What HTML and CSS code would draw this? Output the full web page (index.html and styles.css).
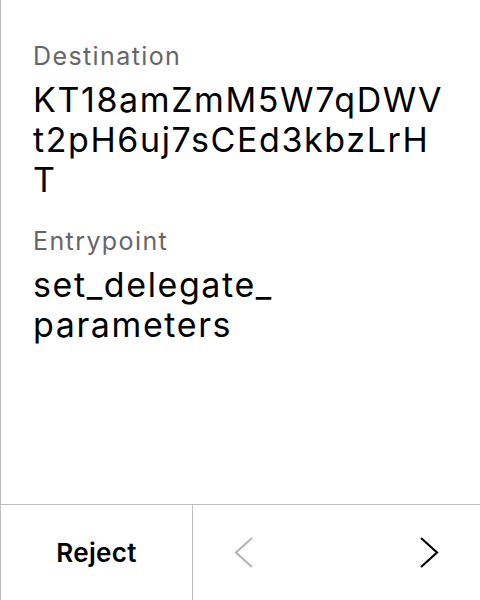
FILE: index.html
```html
<!DOCTYPE html>
<html>
<head>
<meta charset="utf-8">
<link rel="stylesheet" href="styles.css">
</head>
<body>
<div class="screen">
  <main class="content">
    <div class="field">
      <div class="label">Destination</div>
      <div class="value hash">KT18amZmM5W7qDWVt2pH6uj7sCEd3kbzLrHT</div>
    </div>
    <div class="field">
      <div class="label">Entrypoint</div>
      <div class="value">set_delegate_<wbr>parameters</div>
    </div>
  </main>
  <footer class="footer">
    <div class="reject">Reject</div>
    <div class="nav">
      <svg class="chev prev" width="20" height="33" viewBox="0 0 20 33"><path d="M18 2 L2 16.5 L18 31" fill="none" stroke="#b5b5b5" stroke-width="2.2"/></svg>
      <svg class="chev next" width="20" height="33" viewBox="0 0 20 33"><path d="M2 2 L18 16.5 L2 31" fill="none" stroke="#000" stroke-width="2.2"/></svg>
    </div>
  </footer>
</div>
</body>
</html>
```

FILE: styles.css
```css
* { box-sizing: border-box; }
html, body { margin: 0; padding: 0; background: #fff; }
body { font-family: Inter, "Noto Sans", sans-serif; color: #000; }
.screen {
  width: 480px;
  height: 600px;
  border-left: 1px solid #bdbdbd;
  display: flex;
  flex-direction: column;
}
.content {
  flex: 1;
  padding: 40px 32px 0 32px;
  display: flex;
  flex-direction: column;
  gap: 25px;
}
.field { display: flex; flex-direction: column; gap: 8px; }
.label {
  font-size: 25px;
  line-height: 32px;
  letter-spacing: 1.4px;
  color: #666;
}
.value {
  font-size: 34px;
  line-height: 40px;
  letter-spacing: 1.6px;
  color: #000;
}
.hash { word-break: break-all; }
.footer {
  height: 96px;
  border-top: 1px solid #bdbdbd;
  display: flex;
}
.reject {
  width: 192px;
  border-right: 1px solid #bdbdbd;
  display: flex;
  align-items: center;
  justify-content: center;
  font-size: 26px;
  font-weight: 600;
  letter-spacing: 0.3px;
}
.nav {
  flex: 1;
  display: flex;
  align-items: center;
  justify-content: space-between;
  padding: 0 41px 0 41px;
}
.chev { display: block; }
```
